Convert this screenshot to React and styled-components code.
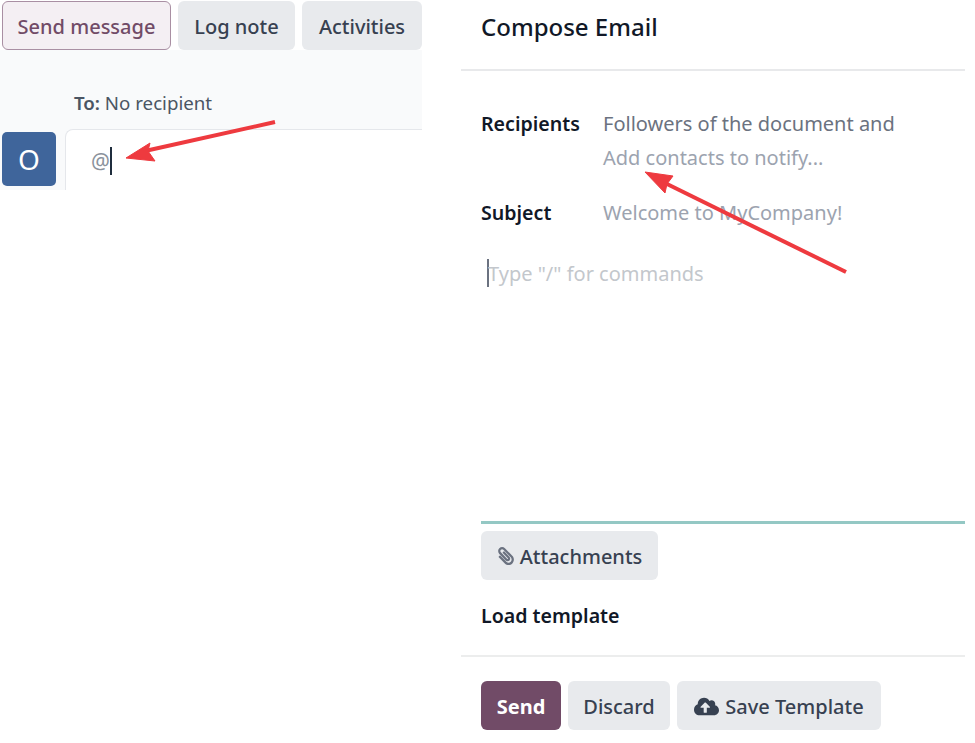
import React from "react";
import styled, { createGlobalStyle } from "styled-components";
import { FaPaperclip, FaCloudUploadAlt } from "react-icons/fa";

const Global = createGlobalStyle`
  html, body {
    margin: 0;
    background: #fff;
    font-family: "Noto Sans", "Open Sans", sans-serif;
    color: #374151;
  }
`;

const Page = styled.div`
  position: relative;
  width: 975px;
  height: 743px;
  display: flex;
  overflow: hidden;
`;

const Left = styled.section`
  width: 422px;
  height: 190px;
  margin-right: 39px;
  display: flex;
  flex-direction: column;
  background: #f9fafb;
`;

const Tabs = styled.div`
  display: flex;
  gap: 7px;
  padding: 1px 0 0 2px;
  background: #fff;
`;

const Button = styled.button`
  height: 49px;
  width: ${(p) => p.$w}px;
  padding: 1px 0 0;
  display: flex;
  align-items: center;
  justify-content: center;
  gap: ${(p) => p.$gap || 6}px;
  font: inherit;
  font-size: 20px;
  font-weight: ${(p) => (p.$primary ? 700 : 500)};
  color: ${(p) => (p.$primary ? "#fff" : p.$active ? "#714b67" : "#374151")};
  background: ${(p) => (p.$primary ? "#714b67" : p.$active ? "#f4eff3" : "#e8eaed")};
  border: ${(p) => (p.$active ? "1.5px solid #a98fa3" : "none")};
  border-radius: 6px;
`;

const ClipIcon = styled(FaPaperclip)`
  transform: scaleX(-1);
  color: #6b7280;
`;

const ToLine = styled.div`
  padding: 41px 0 0 74px;
  height: 38px;
  font-size: 18.7px;
  line-height: 24px;
  color: #4b5563;
  b {
    font-weight: 600;
  }
`;

const ComposerRow = styled.div`
  flex: 1;
  display: flex;
  gap: 9px;
  padding-left: 2px;
`;

const Avatar = styled.div`
  width: 54px;
  height: 54px;
  margin-top: 3px;
  display: flex;
  align-items: center;
  justify-content: center;
  background: #3f659b;
  color: #fff;
  font-size: 28px;
  border-radius: 5px;
`;

const Composer = styled.div`
  flex: 1;
  padding: 15px 0 0 25px;
  display: flex;
  align-items: flex-start;
  background: #fff;
  border: 1px solid #e5e7eb;
  border-width: 1px 0 0 1px;
  border-top-left-radius: 8px;
  font-size: 21px;
  line-height: 32px;
  color: #8b929c;
`;

const Caret = styled.span`
  width: 2px;
  height: 28px;
  margin-top: 2px;
  background: #1f2d3d;
`;

const Right = styled.section`
  width: 504px;
  display: flex;
  flex-direction: column;
`;

const Title = styled.h1`
  margin: 0;
  height: 71px;
  padding: 10px 0 0 20px;
  box-sizing: border-box;
  border-bottom: 2px solid #e8e9eb;
  font-size: 24px;
  line-height: 34px;
  font-weight: 500;
  color: #111827;
`;

const Fields = styled.div`
  padding: 36px 0 0 20px;
  display: grid;
  grid-template-columns: 122px 1fr;
  font-size: 20px;
  line-height: 34px;
`;

const Label = styled.div`
  font-weight: 600;
  color: #111827;
  font-size: 19.6px;
`;

const Value = styled.div`
  color: ${(p) => (p.$muted ? "#9ca3af" : "#6b7280")};
  margin-bottom: ${(p) => p.$mb || 0}px;
`;

const Body = styled.div`
  height: 291px;
  padding: 29px 0 0 26px;
  box-sizing: border-box;
  display: flex;
  align-items: flex-start;
  font-size: 20px;
  line-height: 30px;
  color: #c3c7cc;
`;

const BodyCaret = styled.span`
  width: 2px;
  height: 28px;
  margin-right: -1px;
  background: #6b7280;
`;

const Attach = styled.div`
  margin-left: 20px;
  padding-top: 7px;
  border-top: 3px solid #94c8c4;
`;

const Template = styled.div`
  height: 77px;
  padding: 21px 0 0 20px;
  box-sizing: border-box;
  border-bottom: 2px solid #eceded;
  font-size: 19.6px;
  line-height: 30px;
  font-weight: 600;
  color: #111827;
`;

const Footer = styled.div`
  display: flex;
  gap: 7px;
  padding: 24px 0 0 20px;
`;

const Arrows = styled.svg`
  position: absolute;
  inset: 0;
  pointer-events: none;
`;

export default function App() {
  return (
    <Page>
      <Global />
      <Left>
        <Tabs>
          <Button $w={169} $active>Send message</Button>
          <Button $w={117}>Log note</Button>
          <Button $w={120}>Activities</Button>
        </Tabs>
        <ToLine><b>To:</b> No recipient</ToLine>
        <ComposerRow>
          <Avatar>O</Avatar>
          <Composer>@<Caret /></Composer>
        </ComposerRow>
      </Left>
      <Right>
        <Title>Compose Email</Title>
        <Fields>
          <Label>Recipients</Label>
          <div>
            <Value>Followers of the document and</Value>
            <Value $muted $mb={21}>Add contacts to notify...</Value>
          </div>
          <Label>Subject</Label>
          <Value $muted>Welcome to MyCompany!</Value>
        </Fields>
        <Body><BodyCaret />Type "/" for commands</Body>
        <Attach>
          <Button $w={177} $gap={5}><ClipIcon size={18} />Attachments</Button>
        </Attach>
        <Template>Load template</Template>
        <Footer>
          <Button $w={80} $primary>Send</Button>
          <Button $w={102}>Discard</Button>
          <Button $w={204}><FaCloudUploadAlt size={25} color="#374151" />Save Template</Button>
        </Footer>
      </Right>
      <Arrows width="975" height="743" viewBox="0 0 975 743">
        <g fill="#ee3a3f" stroke="#ee3a3f" strokeLinejoin="round">
          <line x1="275" y1="122" x2="145" y2="151" strokeWidth="4" />
          <polygon points="126,158 150,143 148,151 155,161" strokeWidth="1" />
          <line x1="846" y1="272" x2="665" y2="183" strokeWidth="4" />
          <polygon points="645,172 673,176 667,184 665,193" strokeWidth="1" />
        </g>
      </Arrows>
    </Page>
  );
}
